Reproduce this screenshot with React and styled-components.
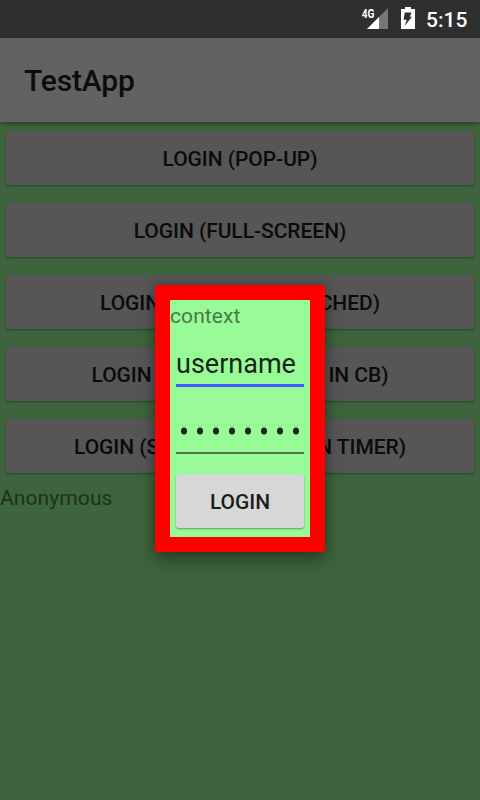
import React from "react";
import styled, { createGlobalStyle } from "styled-components";

const GlobalStyle = createGlobalStyle`
  * { box-sizing: border-box; }
  body { margin: 0; background: #3d643d; font-family: Roboto, sans-serif; overflow: hidden; }
`;

const Screen = styled.div`
  position: relative;
  display: flex;
  flex-direction: column;
  width: 480px;
  height: 800px;
  background: #3d643d;
  overflow: hidden;
`;

const StatusBar = styled.header`
  display: flex;
  flex: none;
  justify-content: flex-end;
  height: 38px;
  background: #2f2f2f;
`;

const StatusIcons = styled.svg`
  display: block;
  width: 65px;
  height: 38px;
`;

const Clock = styled.time`
  width: 54px;
  color: #fff;
  font-size: 21px;
  font-weight: 500;
  line-height: 41px;
`;

const AppBar = styled.div`
  position: relative;
  display: flex;
  flex: none;
  align-items: center;
  height: 84px;
  padding: 1px 24px 0;
  background: #626262;
  box-shadow: 0 2px 4px rgba(0, 0, 0, 0.35);
`;

const Title = styled.h1`
  margin: 0;
  color: #0d0d0d;
  font-size: 30px;
  font-weight: 500;
  line-height: 36px;
  letter-spacing: -0.15px;
`;

const ButtonList = styled.main`
  display: flex;
  flex-direction: column;
  gap: 18px;
  padding: 9px 6px;
`;

const Button = styled.button`
  display: flex;
  flex: none;
  align-items: center;
  justify-content: center;
  width: 100%;
  height: 54px;
  padding: ${(p) => (p.$lit ? "3px 0 0" : "2px 0 0")};
  border: 0;
  border-radius: 3px;
  background: ${(p) => (p.$lit ? "#d6d7d7" : "#565656")};
  color: ${(p) => (p.$lit ? "#1c1c1c" : "#0b0b0b")};
  box-shadow: 0 1px 2px rgba(0, 0, 0, 0.38);
  font: 500 21px/25px Roboto, sans-serif;
  letter-spacing: -0.05px;
  white-space: nowrap;
`;

const ButtonLabel = styled.span`
  display: flex;
  justify-content: space-between;
  width: ${(p) => p.$width}px;
`;

const Caption = styled.p`
  height: 28px;
  margin: 0;
  color: ${(p) => (p.$lit ? "#497849" : "#1d301d")};
  font-size: 21px;
  line-height: 32px;
  letter-spacing: 0.1px;
`;

const DialogLayer = styled.div`
  position: absolute;
  inset: 38px 0 1px;
  display: flex;
  align-items: center;
  justify-content: center;
`;

const Dialog = styled.form`
  display: flex;
  flex-direction: column;
  width: 170px;
  height: 267px;
  padding: 15px;
  border-radius: 3px;
  background: #f00;
  box-shadow: 0 8px 18px rgba(0, 0, 0, 0.35), 0 0 10px rgba(0, 0, 0, 0.2);
`;

const DialogBody = styled.div`
  display: flex;
  flex-direction: column;
  flex: 1;
  background: #98fb98;
`;

const Fields = styled.div`
  display: flex;
  flex-direction: column;
  padding: 0 6px;
`;

const Username = styled.div`
  height: 59px;
  padding-top: 20px;
  border-bottom: 3px solid #3d5afe;
  color: #172617;
  font-size: 27px;
  line-height: 32px;
`;

const Password = styled.div`
  display: flex;
  align-items: center;
  height: 67px;
  margin-bottom: 20px;
  padding: 23px 5px 0;
  border-bottom: 2px solid #497849;
`;

const PasswordDots = styled.svg`
  display: block;
  width: 118px;
  height: 8px;
`;

const ACTIONS = [
  { parts: ["LOGIN (POP-UP)"] },
  { parts: ["LOGIN (FULL-SCREEN)"] },
  { parts: ["LOGIN (POP-UP,", "CACHED)"], width: 280 },
  { parts: ["LOGIN (POP-UP,", "IN CB)"], width: 297 },
  { parts: ["LOGIN (SHOW", "IN TIMER)"], width: 332 },
];

export default function App() {
  return (
    <Screen>
      <GlobalStyle />
      <StatusBar>
        <StatusIcons viewBox="361 0 65 38">
          <path d="M388 8V29H367Z" fill="#777" />
          <path d="M379 17V29H367Z" fill="#fff" />
          <text x="361.8" y="17.7" fill="#fff" fontFamily="Roboto" fontSize="13.3" fontWeight="700" textLength="12.7" lengthAdjust="spacingAndGlyphs">4G</text>
          <path d="M405 7H411V9H415V29H401V9H405ZM404.8 12.5H411.6L409.7 16.8H412L404.5 26L406.8 19.8H403.6Z" fill="#fff" fillRule="evenodd" />
        </StatusIcons>
        <Clock>5:15</Clock>
      </StatusBar>
      <AppBar>
        <Title>TestApp</Title>
      </AppBar>
      <ButtonList>
        {ACTIONS.map(({ parts, width }, i) => (
          <Button key={i}>
            {width ? (
              <ButtonLabel $width={width}>
                {parts.map((part) => (
                  <span key={part}>{part}</span>
                ))}
              </ButtonLabel>
            ) : (
              parts[0]
            )}
          </Button>
        ))}
      </ButtonList>
      <Caption>Anonymous</Caption>
      <DialogLayer>
        <Dialog onSubmit={(e) => e.preventDefault()}>
          <DialogBody>
            <Caption $lit>context</Caption>
            <Fields>
              <Username>username</Username>
              <Password>
                <PasswordDots viewBox="0 0 118 8">
                  {Array.from({ length: 8 }, (_, i) => (
                    <ellipse key={i} cx={3 + i * 16} cy="4" rx="3" ry="3.5" fill="#172617" />
                  ))}
                </PasswordDots>
              </Password>
              <Button $lit type="submit">LOGIN</Button>
            </Fields>
          </DialogBody>
        </Dialog>
      </DialogLayer>
    </Screen>
  );
}
